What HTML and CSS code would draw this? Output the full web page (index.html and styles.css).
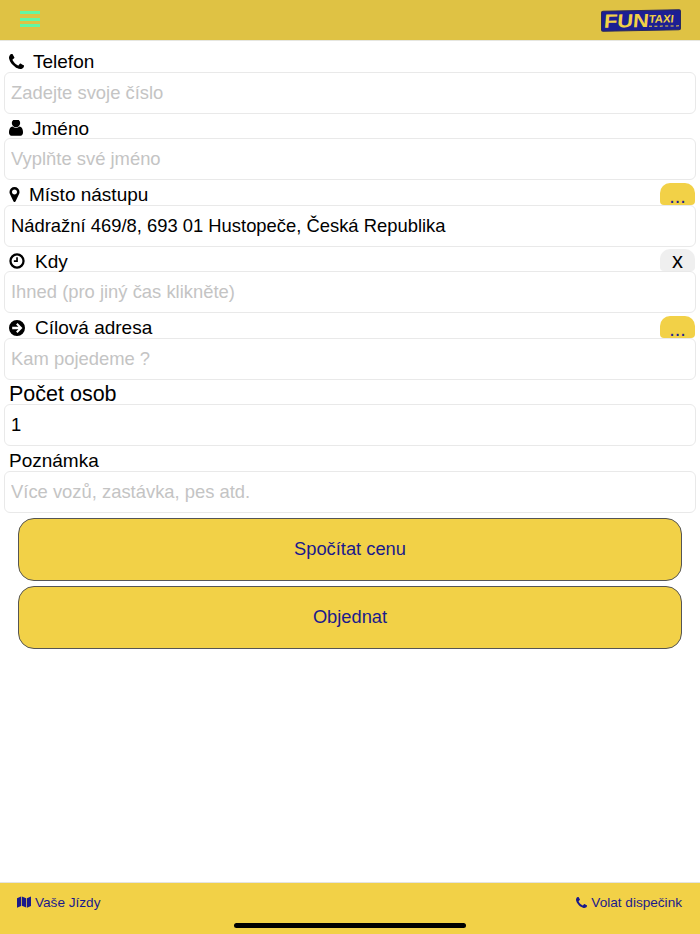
FILE: index.html
```html
<!DOCTYPE html>
<html lang="cs">
<head>
<meta charset="utf-8">
<title>Fun Taxi</title>
<link rel="stylesheet" href="styles.css">
</head>
<body>
<div class="app">
  <header class="topbar">
    <div class="burger"><span></span><span></span><span></span></div>
    <div class="logo"><span class="logo-fun">FUN</span><span class="logo-taxi"><span class="logo-taxi-text">TAXI</span><span class="logo-dash"></span></span></div>
  </header>
  <main class="form">
    <div class="field">
      <div class="label">
        <svg class="ico ico-phone" viewBox="0 0 1408 1408"><path d="M1408 1112q0 27-10 70.500t-21 68.500q-21 50-122 106-94 51-186 51-27 0-53-3.500t-57.500-12.500-47-14.500-55.500-20.500-49-18q-98-35-175-83-127-79-264-216t-216-264q-48-77-83-175-3-9-18-49t-20.500-55.500-14.500-47-12.500-57.500-3.500-53q0-92 51-186 56-101 106-122 25-11 68.500-21t70.500-10q14 0 21 3 18 6 53 76 11 19 30 54t35 63.500 31 53.500q3 4 17.500 25t21.500 35.500 7 28.500q0 20-28.500 50t-62 55-62 53-28.500 46q0 9 5 22.500t8.500 20.500 14 24 11.500 19q76 137 174 235t235 174q2 1 19 11.500t24 14 20.500 8.500 22.500 5q18 0 46-28.500t53-62 55-62 50-28.500q14 0 28.500 7t35.500 21.500 25 17.500q25 15 53.500 31t63.500 35 54 30q70 35 76 53 3 7 3 21z"/></svg>
        <span>Telefon</span>
      </div>
      <input class="input" type="text" placeholder="Zadejte svoje číslo">
    </div>
    <div class="field">
      <div class="label">
        <svg class="ico ico-user" viewBox="0 0 1280 1408"><path d="M1280 1271q0 109-62.500 187t-150.500 78h-854q-88 0-150.500-78t-62.500-187q0-85 8.500-160.500t31.500-152 58.500-131 94-89 134.500-34.500q131 128 313 128t313-128q76 0 134.500 34.500t94 89 58.500 131 31.500 152 8.500 160.500zm-256-887q0 159-112.500 271.500t-271.500 112.500-271.500-112.500-112.500-271.500 112.500-271.500 271.500-112.500 271.500 112.500 112.500 271.500z" transform="translate(0 -128)"/></svg>
        <span>Jméno</span>
      </div>
      <input class="input" type="text" placeholder="Vyplňte své jméno">
    </div>
    <div class="field">
      <div class="label">
        <svg class="ico ico-pin" viewBox="0 0 1024 1536"><path d="M768 512q0-106-75-181t-181-75-181 75-75 181 75 181 181 75 181-75 75-181zm256 0q0 109-33 179l-364 774q-16 33-47.500 52t-67.500 19-67.500-19-46.500-52l-365-774q-33-70-33-179 0-212 150-362t362-150 362 150 150 362z"/></svg>
        <span>Místo nástupu</span>
        <button class="mini mini-yellow" type="button">...</button>
      </div>
      <input class="input" type="text" value="Nádražní 469/8, 693 01 Hustopeče, Česká Republika">
    </div>
    <div class="field">
      <div class="label">
        <svg class="ico ico-clock" viewBox="0 0 24 24"><circle cx="12" cy="12" r="9.800" fill="none" stroke="#000" stroke-width="3.400"/><path d="M13.300 6.500v7h-6v-2.500h3.500v-4.500z"/></svg>
        <span>Kdy</span>
        <button class="mini mini-grey" type="button">x</button>
      </div>
      <input class="input" type="text" placeholder="Ihned (pro jiný čas klikněte)">
    </div>
    <div class="field">
      <div class="label">
        <svg class="ico ico-arrow" viewBox="0 0 24 24"><path fill-rule="evenodd" d="M12 0a12 12 0 1 1 0 24 12 12 0 0 1 0-24zm.8 4.600-2.200 2.200 3.500 3.500H4.800v3.400h9.300l-3.500 3.500 2.200 2.200L20.200 12z"/></svg>
        <span>Cílová adresa</span>
        <button class="mini mini-yellow" type="button">...</button>
      </div>
      <input class="input" type="text" placeholder="Kam pojedeme ?">
    </div>
    <div class="field">
      <div class="label label-big">Počet osob</div>
      <input class="input" type="text" value="1">
    </div>
    <div class="field">
      <div class="label label-note">Poznámka</div>
      <input class="input" type="text" placeholder="Více vozů, zastávka, pes atd.">
    </div>
    <div class="actions">
      <button class="btn" type="button">Spočítat cenu</button>
      <button class="btn" type="button">Objednat</button>
    </div>
  </main>
  <footer class="bottombar">
    <a class="foot-link"><svg class="foot-ico map" viewBox="0 0 24 20"><path d="M0 3.500 7 .5v16.200l-7 3zM8.300.5l7.400 3v16l-7.400-3zM17 3.500l7-3v16.200l-7 3z"/></svg>Vaše Jízdy</a>
    <a class="foot-link"><svg class="foot-ico" viewBox="0 0 1408 1408"><path d="M1408 1112q0 27-10 70.500t-21 68.500q-21 50-122 106-94 51-186 51-27 0-53-3.500t-57.500-12.500-47-14.500-55.500-20.500-49-18q-98-35-175-83-127-79-264-216t-216-264q-48-77-83-175-3-9-18-49t-20.500-55.500-14.500-47-12.500-57.500-3.500-53q0-92 51-186 56-101 106-122 25-11 68.500-21t70.500-10q14 0 21 3 18 6 53 76 11 19 30 54t35 63.500 31 53.500q3 4 17.500 25t21.500 35.500 7 28.500q0 20-28.500 50t-62 55-62 53-28.500 46q0 9 5 22.500t8.500 20.500 14 24 11.500 19q76 137 174 235t235 174q2 1 19 11.500t24 14 20.500 8.500 22.500 5q18 0 46-28.500t53-62 55-62 50-28.500q14 0 28.500 7t35.500 21.500 25 17.500q25 15 53.500 31t63.500 35 54 30q70 35 76 53 3 7 3 21z"/></svg>Volat dispečink</a>
    <div class="home-indicator"></div>
  </footer>
</div>
</body>
</html>
```
FILE: styles.css
```css
* { box-sizing: border-box; }
html, body { margin: 0; padding: 0; height: 100%; }
body { background: #fff; font-family: "Liberation Sans", Arial, sans-serif; color: #000; }
.app { height: 934px; display: flex; flex-direction: column; overflow: hidden; }
.topbar { height: 41px; flex: none; background: #dfc244; border-bottom: 1px solid #e6e6e0; display: flex; align-items: center; justify-content: space-between; padding: 0 19px 1px 20px; }
.burger { width: 20px; height: 16px; margin-top: -1px; display: flex; flex-direction: column; justify-content: space-between; }
.burger span { height: 3px; background: #63f7a4; }
.logo { width: 80px; height: 21px; margin-top: 1px; background: #1c1f93; border: 1px solid #2a2a5c; border-radius: 2px; transform: skewY(-1deg); display: flex; align-items: center; padding-left: 2px; font-weight: 700; color: #f2d147; overflow: hidden; }
.logo-fun { font-size: 19px; line-height: 20px; width: 44px; flex: none; transform: skewX(-5deg) scaleX(1.15); transform-origin: left center; }
.logo-taxi { display: flex; flex-direction: column; margin-left: 1px; width: 30px; }
.logo-taxi-text { font-size: 11px; line-height: 10px; transform: skewX(-6deg) scaleX(1.02); transform-origin: left center; }
.logo-dash { height: 1px; margin-top: 2px; border-top: 1px dashed #f2d147; }
.form { flex: 1; padding: 6.250px 4px 0; display: flex; flex-direction: column; }
.field { display: flex; flex-direction: column; }
.label { height: 24.500px; display: flex; align-items: center; padding: 5px 0 0 5px; font-size: 19px; line-height: 19.500px; position: relative; }
.label-big { font-size: 21.500px; padding-top: 6px; }
.label-note { font-size: 19px; }
.ico { flex: none; fill: #000; display: block; margin-top: -1px; }
.ico-phone { width: 15px; height: 15px; margin-right: 9px; }
.ico-user { width: 14px; height: 16px; margin-right: 9px; }
.ico-pin { width: 11px; height: 15px; margin-right: 9px; }
.ico-clock { width: 16px; height: 16px; margin-right: 10px; }
.ico-arrow { width: 16px; height: 16px; margin-right: 10px; }
.mini { position: absolute; right: 1px; bottom: 0; width: 35px; height: 22px; border: 0; border-radius: 10px 10px 4px 4px; padding: 0; font-family: inherit; display: flex; align-items: flex-end; justify-content: center; }
.mini-yellow { background: #f2d147; color: #1c1f93; font-size: 20px; font-weight: 400; line-height: 18px; }
.mini-grey { background: #efefef; color: #000; font-size: 22px; line-height: 20px; }
.input { display: block; width: 100%; height: 42px; border: 1px solid #e9e9e9; border-radius: 6px; background: #fff; padding: 0 6px; font-family: inherit; font-size: 18.400px; color: #000; outline: 0; }
.input::placeholder { color: #c4c4c4; opacity: 1; }
.actions { display: flex; flex-direction: column; gap: 5px; padding: 5px 14px 0; }
.btn { height: 63px; background: #f2d147; border: 1px solid #555; border-radius: 16px; color: #1a1a8c; font-family: inherit; font-size: 18.300px; padding: 0 0 1px; }
.bottombar { height: 52px; flex: none; background: #f2d147; border-top: 1px solid #e4e4e0; display: flex; justify-content: space-between; padding: 10px 18px 0 17px; position: relative; }
.foot-link { display: flex; align-items: center; height: 18px; color: #1a1a8c; font-size: 13.600px; }
.foot-ico { width: 11px; height: 11px; fill: #1a1a8c; margin-right: 4px; display: block; }
.foot-ico.map { width: 14px; height: 12px; }
.home-indicator { position: absolute; left: 234px; bottom: 6px; width: 232px; height: 5px; border-radius: 3px; background: #000; }
```
